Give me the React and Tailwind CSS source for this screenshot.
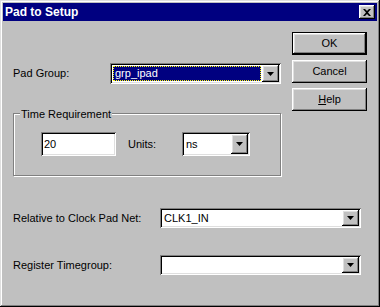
import React from "react";

const raised =
  "shadow-[inset_-1px_-1px_#000,inset_1px_1px_#fff,inset_-2px_-2px_#808080,inset_2px_2px_#dfdfdf]";
const sunken =
  "shadow-[inset_1px_1px_#808080,inset_-1px_-1px_#fff,inset_2px_2px_#000,inset_-2px_-2px_#dfdfdf]";

function Arrow() {
  return (
    <svg width="7" height="4" viewBox="0 0 7 4">
      <polygon points="0,0 7,0 3.5,4" fill="#000" />
    </svg>
  );
}

function Combo({ className, value, selected }) {
  return (
    <div className={`bg-white flex p-[2px] ${sunken} ${className}`}>
      <div className="flex-1 flex items-stretch">
        {selected ? (
          <div className="flex-1 m-[1px] bg-[#000080] text-white border border-dotted border-[#ffff00] flex items-center pl-[1px]">
            {value}
          </div>
        ) : (
          <div className="flex items-center pl-[2px]">{value}</div>
        )}
      </div>
      <div className={`w-[17px] bg-[#c0c0c0] flex items-center justify-center ${raised}`}>
        <Arrow />
      </div>
    </div>
  );
}

export default function App() {
  return (
    <div
      className={`w-[380px] h-[307px] bg-[#c0c0c0] p-[3px] text-[11px] text-black font-['Liberation_Sans',Arial,sans-serif] shadow-[inset_-1px_-1px_#000,inset_1px_1px_#dfdfdf,inset_-2px_-2px_#808080,inset_2px_2px_#fff]`}
    >
      <div className="h-[18px] bg-[#000080] flex items-center justify-between pl-[2px] pr-[2px]">
        <span className="text-white font-bold text-[12px]">Pad to Setup</span>
        <div className={`w-[16px] h-[14px] bg-[#c0c0c0] flex items-center justify-center ${raised}`}>
          <svg width="8" height="7" viewBox="0 0 8 7">
            <path d="M0 0h2l2 2 2-2h2L5 3.5 8 7H6L4 5 2 7H0l3-3.5z" fill="#000" />
          </svg>
        </div>
      </div>

      <div className="flex">
        <div className="w-[278px] pl-[10px]">
          <div className="mt-[42px] h-[21px] flex items-center">
            <span className="w-[97px]">Pad Group:</span>
            <Combo className="w-[171px] h-[21px]" value="grp_ipad" selected />
          </div>

          <div className="relative mt-[29px] h-[63px] border border-[#808080] shadow-[inset_1px_1px_#fff,1px_1px_#fff] pl-[27px] pt-[18px] flex items-start">
            <span className="absolute left-[6px] top-[-8px] bg-[#c0c0c0] px-[1px]">
              Time Requirement
            </span>
            <div className={`w-[75px] h-[24px] bg-white flex items-center pl-[3px] ${sunken}`}>
              20
            </div>
            <span className="w-[54px] h-[24px] flex items-center ml-[12px]">Units:</span>
            <Combo className="w-[68px] h-[24px]" value="ns" />
          </div>
        </div>

        <div className="ml-[11px] mt-[11px] w-[75px] flex flex-col gap-[5px]">
          <button className="h-[23px] border border-black bg-[#c0c0c0]">
            <div className={`h-full flex items-center justify-center ${raised}`}>OK</div>
          </button>
          <button className={`h-[23px] bg-[#c0c0c0] flex items-center justify-center ${raised}`}>
            Cancel
          </button>
          <button className={`h-[23px] bg-[#c0c0c0] flex items-center justify-center ${raised}`}>
            <span>
              <span className="underline">H</span>elp
            </span>
          </button>
        </div>
      </div>

      <div className="mt-[32px] pl-[10px] h-[20px] flex items-center">
        <span className="w-[147px]">Relative to Clock Pad Net:</span>
        <Combo className="w-[201px] h-[20px]" value="CLK1_IN" />
      </div>
      <div className="mt-[27px] pl-[10px] h-[20px] flex items-center">
        <span className="w-[147px]">Register Timegroup:</span>
        <Combo className="w-[201px] h-[20px]" value="" />
      </div>
    </div>
  );
}
